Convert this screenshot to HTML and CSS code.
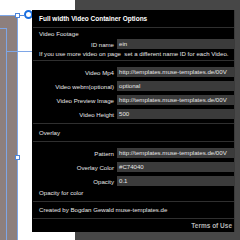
FILE: index.html
```html
<!DOCTYPE html>
<html lang="en">
<head>
  <meta charset="UTF-8">
  <title>Full width Video Container Options</title>
  <link rel="stylesheet" href="styles.css">
</head>
<body>
  <div class="stage"></div>

  <div class="element">
    <div class="guide-h top"></div>
    <div class="guide-v"></div>
    <div class="guide-h mid"></div>
  </div>
  <span class="handle sq top"></span>
  <span class="handle sq bottom"></span>
  <span class="handle link"></span>
  <span class="link-line"></span>

  <div class="panel">
    <div class="title">Full width Video Container Options</div>

    <div class="section">Video Footage</div>
    <div class="field first">
      <label>ID name</label>
      <div class="input">ein</div>
    </div>
    <div class="note">If you use more video on page&nbsp; set a different name ID for each Video.</div>

    <div class="group">
      <div class="field">
        <label>Video Mp4</label>
        <div class="input">http://templates.muse-templates.de/00V</div>
      </div>
      <div class="field">
        <label>Video webm(optional)</label>
        <div class="input">optional</div>
      </div>
      <div class="field">
        <label>Video Preview Image</label>
        <div class="input">http://templates.muse-templates.de/00V</div>
      </div>
      <div class="field">
        <label>Video Height</label>
        <div class="input">500</div>
      </div>
    </div>

    <div class="section big">Overlay</div>

    <div class="group">
      <div class="field">
        <label>Pattern</label>
        <div class="input">http://templates.muse-templates.de/00V</div>
      </div>
      <div class="field">
        <label>Overlay Color</label>
        <div class="input">#C74040</div>
      </div>
      <div class="field">
        <label>Opacity</label>
        <div class="input">0.1</div>
      </div>
      <div class="note">Opacity for color</div>
    </div>

    <div class="credit">Created by Bogdan Gewald muse-templates.de</div>
    <div class="terms">Terms of Use</div>
  </div>
</body>
</html>
```

FILE: styles.css
```css
html, body {
  margin: 0;
  padding: 0;
}

body {
  width: 240px;
  height: 240px;
  background-color: #ffffff;
  position: relative;
  overflow: hidden;
  font-family: 'Liberation Sans', Arial, sans-serif;
  font-size: 6.1px;
  color: #e6e6e6;
}

/* dark design canvas behind the dialog */
.stage {
  position: absolute;
  left: 75px;
  top: 0;
  right: 0;
  bottom: 0;
  background-color: #474747;
}

/* selected page element on the canvas */
.element {
  position: absolute;
  left: 0;
  top: 15px;
  width: 17px;
  bottom: 0;
  background-color: #8d7f7d;
  border-top: 1px solid #7ea6e6;
  border-right: 1px solid #7ea6e6;
}

.guide-v {
  position: absolute;
  left: 6px;
  top: 12px;
  bottom: 0;
  width: 1px;
  background-color: #7ea6e6;
}

.guide-h {
  position: absolute;
  height: 1px;
  background-color: #7ea6e6;
}

.guide-h.top {
  left: 0;
  top: 12px;
  width: 7px;
}

.guide-h.mid {
  left: 6px;
  top: 35px;
  width: 27px;
}

.handle {
  position: absolute;
  box-sizing: border-box;
}

.handle.sq {
  width: 5px;
  height: 5px;
  left: 15px;
  background-color: #ffffff;
  border: 1px solid #4d86dc;
}

.handle.sq.top { top: 13px; }
.handle.sq.bottom { top: 155px; }

.handle.link {
  left: 24px;
  top: 10px;
  width: 9px;
  height: 9px;
  border-radius: 50%;
  background-color: #ffffff;
  border: 2.5px solid #1a6fe0;
}

.link-line {
  position: absolute;
  left: 20px;
  top: 15px;
  width: 5px;
  height: 1px;
  background-color: #4d86dc;
}

/* options dialog */
.panel {
  position: absolute;
  left: 32px;
  top: 10px;
  width: 201px;
  height: 222px;
  background-color: #000000;
  border-right: 1px solid #3a3a3a;
  display: flex;
  flex-direction: column;
  padding: 0 0 0 1px;
}

.panel > div {
  border-bottom: 1px solid #2f2f2f;
}

.title {
  height: 17px;
  line-height: 17px;
  padding-left: 6px;
  font-size: 6.5px;
  font-weight: bold;
  color: #ffffff;
}

.section {
  height: 11px;
  line-height: 12px;
  padding-left: 6px;
  border-bottom: none !important;
}

.section.big {
  height: 17px;
  line-height: 17px;
  border-bottom: 1px solid #2f2f2f !important;
}

.field {
  display: flex;
  align-items: center;
  height: 14px;
  border-bottom: none !important;
}

.field label {
  width: 81px;
  text-align: right;
  padding-right: 3px;
  white-space: nowrap;
}

.input {
  flex: 1;
  height: 10px;
  line-height: 10px;
  background-color: #3b3b3b;
  padding-left: 2px;
  white-space: nowrap;
  overflow: hidden;
}

.note {
  height: 10px;
  line-height: 10px;
  padding-left: 6px;
  padding-bottom: 1px;
  white-space: nowrap;
}

.group {
  padding-top: 4px;
  padding-bottom: 2px;
}

.group .note {
  border-bottom: none;
}

.credit {
  height: 16px;
  line-height: 16px;
  padding-left: 6px;
}

.terms {
  flex: 1;
  text-align: right;
  padding-right: 2px;
  line-height: 14px;
  font-size: 6.5px;
  font-weight: bold;
  color: #b5b5b5;
  border-bottom: none !important;
}
```
